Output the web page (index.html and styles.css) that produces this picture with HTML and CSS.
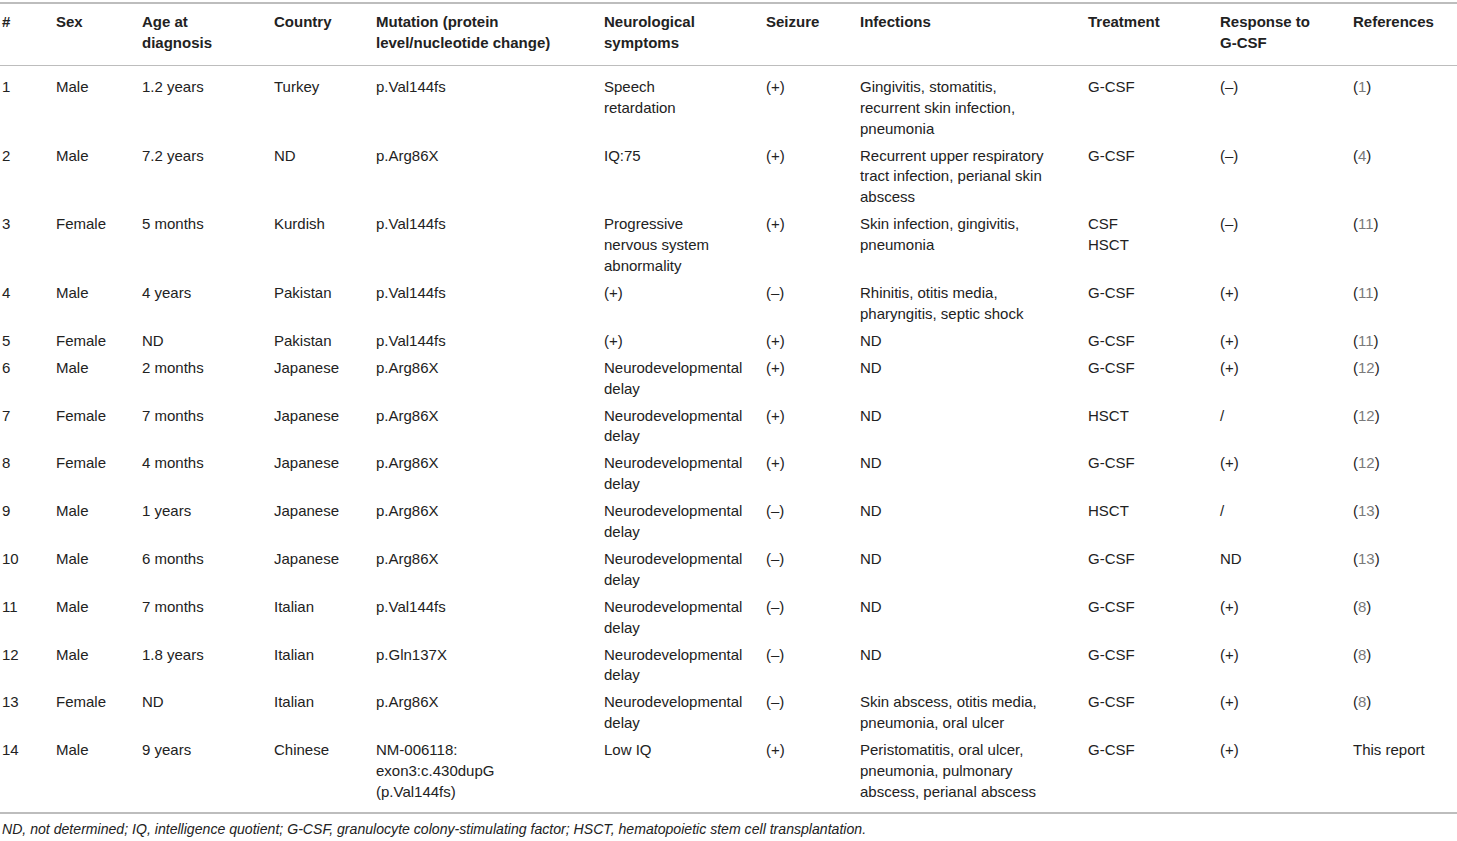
FILE: index.html
```html
<!DOCTYPE html>
<html lang="en">
<head>
<meta charset="utf-8">
<title>Table</title>
<link rel="stylesheet" href="styles.css">
</head>
<body>
<div class="wrap">
<table class="data">
<colgroup>
<col class="c1"><col class="c2"><col class="c3"><col class="c4"><col class="c5"><col class="c6"><col class="c7"><col class="c8"><col class="c9"><col class="c10"><col class="c11">
</colgroup>
<thead>
<tr>
<th>#</th><th>Sex</th><th>Age at<br>diagnosis</th><th>Country</th><th>Mutation (protein<br>level/nucleotide change)</th><th>Neurological<br>symptoms</th><th>Seizure</th><th>Infections</th><th>Treatment</th><th>Response to<br>G-CSF</th><th>References</th>
</tr>
</thead>
<tbody>
<tr><td>1</td><td>Male</td><td>1.2 years</td><td>Turkey</td><td>p.Val144fs</td><td>Speech<br>retardation</td><td>(+)</td><td>Gingivitis, stomatitis,<br>recurrent skin infection,<br>pneumonia</td><td>G-CSF</td><td>(–)</td><td>(<span class="ref">1</span>)</td></tr>
<tr><td>2</td><td>Male</td><td>7.2 years</td><td>ND</td><td>p.Arg86X</td><td>IQ:75</td><td>(+)</td><td>Recurrent upper respiratory<br>tract infection, perianal skin<br>abscess</td><td>G-CSF</td><td>(–)</td><td>(<span class="ref">4</span>)</td></tr>
<tr><td>3</td><td>Female</td><td>5 months</td><td>Kurdish</td><td>p.Val144fs</td><td>Progressive<br>nervous system<br>abnormality</td><td>(+)</td><td>Skin infection, gingivitis,<br>pneumonia</td><td>CSF<br>HSCT</td><td>(–)</td><td>(<span class="ref">11</span>)</td></tr>
<tr><td>4</td><td>Male</td><td>4 years</td><td>Pakistan</td><td>p.Val144fs</td><td>(+)</td><td>(–)</td><td>Rhinitis, otitis media,<br>pharyngitis, septic shock</td><td>G-CSF</td><td>(+)</td><td>(<span class="ref">11</span>)</td></tr>
<tr><td>5</td><td>Female</td><td>ND</td><td>Pakistan</td><td>p.Val144fs</td><td>(+)</td><td>(+)</td><td>ND</td><td>G-CSF</td><td>(+)</td><td>(<span class="ref">11</span>)</td></tr>
<tr><td>6</td><td>Male</td><td>2 months</td><td>Japanese</td><td>p.Arg86X</td><td>Neurodevelopmental<br>delay</td><td>(+)</td><td>ND</td><td>G-CSF</td><td>(+)</td><td>(<span class="ref">12</span>)</td></tr>
<tr><td>7</td><td>Female</td><td>7 months</td><td>Japanese</td><td>p.Arg86X</td><td>Neurodevelopmental<br>delay</td><td>(+)</td><td>ND</td><td>HSCT</td><td>/</td><td>(<span class="ref">12</span>)</td></tr>
<tr><td>8</td><td>Female</td><td>4 months</td><td>Japanese</td><td>p.Arg86X</td><td>Neurodevelopmental<br>delay</td><td>(+)</td><td>ND</td><td>G-CSF</td><td>(+)</td><td>(<span class="ref">12</span>)</td></tr>
<tr><td>9</td><td>Male</td><td>1 years</td><td>Japanese</td><td>p.Arg86X</td><td>Neurodevelopmental<br>delay</td><td>(–)</td><td>ND</td><td>HSCT</td><td>/</td><td>(<span class="ref">13</span>)</td></tr>
<tr><td>10</td><td>Male</td><td>6 months</td><td>Japanese</td><td>p.Arg86X</td><td>Neurodevelopmental<br>delay</td><td>(–)</td><td>ND</td><td>G-CSF</td><td>ND</td><td>(<span class="ref">13</span>)</td></tr>
<tr><td>11</td><td>Male</td><td>7 months</td><td>Italian</td><td>p.Val144fs</td><td>Neurodevelopmental<br>delay</td><td>(–)</td><td>ND</td><td>G-CSF</td><td>(+)</td><td>(<span class="ref">8</span>)</td></tr>
<tr><td>12</td><td>Male</td><td>1.8 years</td><td>Italian</td><td>p.Gln137X</td><td>Neurodevelopmental<br>delay</td><td>(–)</td><td>ND</td><td>G-CSF</td><td>(+)</td><td>(<span class="ref">8</span>)</td></tr>
<tr><td>13</td><td>Female</td><td>ND</td><td>Italian</td><td>p.Arg86X</td><td>Neurodevelopmental<br>delay</td><td>(–)</td><td>Skin abscess, otitis media,<br>pneumonia, oral ulcer</td><td>G-CSF</td><td>(+)</td><td>(<span class="ref">8</span>)</td></tr>
<tr><td>14</td><td>Male</td><td>9 years</td><td>Chinese</td><td>NM-006118:<br>exon3:c.430dupG<br>(p.Val144fs)</td><td>Low IQ</td><td>(+)</td><td>Peristomatitis, oral ulcer,<br>pneumonia, pulmonary<br>abscess, perianal abscess</td><td>G-CSF</td><td>(+)</td><td>This report</td></tr>
</tbody>
</table>
<p class="note">ND, not determined; IQ, intelligence quotient; G-CSF, granulocyte colony-stimulating factor; HSCT, hematopoietic stem cell transplantation.</p>
</div>
</body>
</html>
```

FILE: styles.css
```css
html, body {
  margin: 0;
  padding: 0;
  background: #ffffff;
}

.wrap {
  padding-top: 2px;
  font-family: "Liberation Sans", Arial, sans-serif;
  color: #222222;
}

.data {
  width: 1457px;
  table-layout: fixed;
  border-collapse: collapse;
  font-size: 15px;
  line-height: 20.9px;
}

.c1 { width: 54px; }
.c2 { width: 86px; }
.c3 { width: 132px; }
.c4 { width: 102px; }
.c5 { width: 228px; }
.c6 { width: 162px; }
.c7 { width: 94px; }
.c8 { width: 228px; }
.c9 { width: 132px; }
.c10 { width: 133px; }
.c11 { width: 106px; }

.data th,
.data td {
  text-align: left;
  vertical-align: top;
  white-space: nowrap;
  padding: 3px 2px 3px 2px;
}

.data thead tr {
  border-top: 2px solid #bdbdbd;
  border-bottom: 1px solid #bdbdbd;
}

.data th {
  font-weight: bold;
  padding-top: 8px;
  padding-bottom: 11px;
}

.data tbody tr:first-child td {
  padding-top: 11px;
}

.data tbody tr:last-child {
  border-bottom: 2px solid #bdbdbd;
}

.data tbody tr:last-child td {
  padding-bottom: 9px;
}

.ref {
  color: #7a7a7a;
}

.note {
  margin: 0;
  padding: 6px 2px 0 2px;
  font-size: 14.1px;
  font-style: italic;
  line-height: 18px;
}
```
